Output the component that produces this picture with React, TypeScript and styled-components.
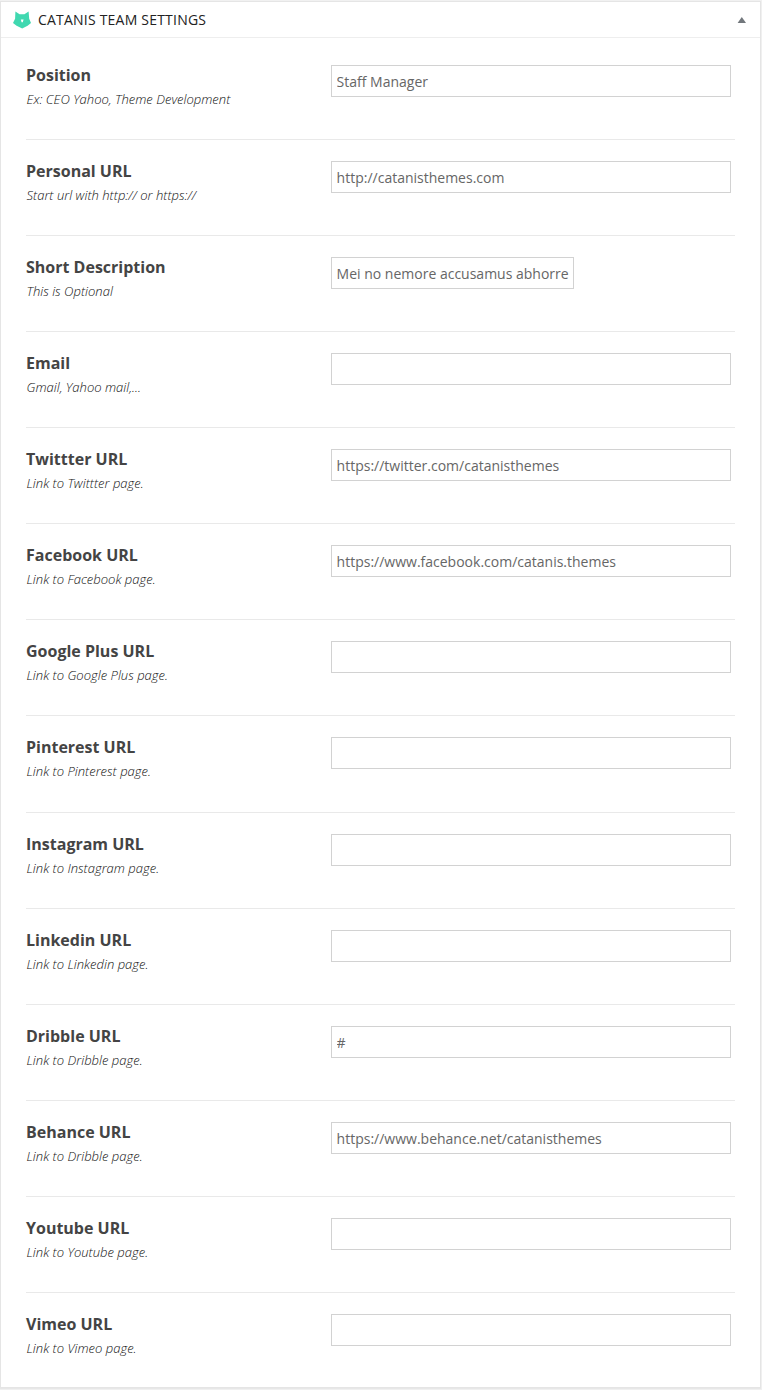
import React from "react";
import styled, { createGlobalStyle } from "styled-components";

const GlobalStyle = createGlobalStyle`
  * { box-sizing: border-box; }
  body {
    margin: 0;
    background: #f1f1f1;
    font-family: "Open Sans", "Liberation Sans", sans-serif;
    color: #444;
  }
`;

const Page = styled.main`
  height: 1390px;
  padding-top: 1px;
`;

const Panel = styled.section`
  width: 761px;
  height: 1387px;
  background: #fff;
  border: 1px solid #e5e5e5;
  box-shadow: 0 1px 1px rgba(0, 0, 0, 0.04);
`;

const Header = styled.header`
  display: flex;
  align-items: center;
  height: 36px;
  padding: 0 14px 0 11px;
  border-bottom: 1px solid #eee;
`;

const Logo = styled.svg`
  width: 20px;
  height: 18px;
  margin-right: 6px;
  flex: none;
`;

const Title = styled.h2`
  margin: 0;
  flex: 1;
  font-size: 14px;
  line-height: 20px;
  font-weight: 400;
  letter-spacing: 0.21px;
  color: #222;
`;

const Toggle = styled.svg`
  width: 9px;
  height: 6px;
  flex: none;
`;

const Fields = styled.div`
  padding: 5.92px 25px 0 25px;
`;

const Row = styled.div`
  display: flex;
  height: 96.08px;
  padding-top: 21px;
  border-bottom: 1px solid #e9e9e9;
  &:last-child { border-bottom: 0; }
`;

const Caption = styled.div`
  width: 305px;
  flex: none;
`;

const Label = styled.label`
  display: block;
  font-size: 16px;
  line-height: 20px;
  font-weight: 700;
  color: #444;
`;

const Hint = styled.p`
  margin: 5px 0 0;
  padding-left: 0.5px;
  font-size: 13px;
  line-height: 18px;
  letter-spacing: 0.02px;
  font-style: italic;
  font-weight: 300;
  color: #111;
`;

const Input = styled.input<{ $width?: number }>`
  width: ${(p) => p.$width ?? 400}px;
  height: 32px;
  padding: 1.4px 4px 0 4.6px;
  border: 1px solid #d2d2d2;
  border-radius: 0;
  background: #fff;
  font: 14px "Open Sans", "Liberation Sans", sans-serif;
  color: #666;
  outline: none;
`;

type Field = { label: string; hint: string; value?: string; width?: number };

const fields: Field[] = [
  { label: "Position", hint: "Ex: CEO Yahoo, Theme Development", value: "Staff Manager" },
  { label: "Personal URL", hint: "Start url with http:// or https://", value: "http://catanisthemes.com" },
  { label: "Short Description", hint: "This is Optional", value: "Mei no nemore accusamus abhorre", width: 243 },
  { label: "Email", hint: "Gmail, Yahoo mail,..." },
  { label: "Twittter URL", hint: "Link to Twittter page.", value: "https://twitter.com/catanisthemes" },
  { label: "Facebook URL", hint: "Link to Facebook page.", value: "https://www.facebook.com/catanis.themes" },
  { label: "Google Plus URL", hint: "Link to Google Plus page." },
  { label: "Pinterest URL", hint: "Link to Pinterest page." },
  { label: "Instagram URL", hint: "Link to Instagram page." },
  { label: "Linkedin URL", hint: "Link to Linkedin page." },
  { label: "Dribble URL", hint: "Link to Dribble page.", value: "#" },
  { label: "Behance URL", hint: "Link to Dribble page.", value: "https://www.behance.net/catanisthemes" },
  { label: "Youtube URL", hint: "Link to Youtube page." },
  { label: "Vimeo URL", hint: "Link to Vimeo page." },
];

export default function App() {
  return (
    <Page>
      <GlobalStyle />
      <Panel>
        <Header>
          <Logo viewBox="0 0 20 18" aria-hidden="true">
            <path
              d="M3.4 0.6 L7.6 3.2 H12.4 L16.6 0.6 L17.2 7.8 L19 12 L15.6 14.8 L10.2 17.4 L4.6 14.8 L1 12 L3.1 7.8 Z"
              fill="#40d8b0"
            />
            <path d="M8.8 8.6 H11.6 L10.8 11.2 H9.6 Z" fill="#fff" />
          </Logo>
          <Title>CATANIS TEAM SETTINGS</Title>
          <Toggle viewBox="0 0 9 6" aria-hidden="true">
            <path d="M4.8 0 L9 6 H0.6 Z" fill="#72777c" />
          </Toggle>
        </Header>
        <Fields>
          {fields.map((f, i) => (
            <Row key={f.label}>
              <Caption>
                <Label htmlFor={`field-${i}`}>{f.label}</Label>
                <Hint>{f.hint}</Hint>
              </Caption>
              <Input id={`field-${i}`} type="text" defaultValue={f.value ?? ""} $width={f.width} />
            </Row>
          ))}
        </Fields>
      </Panel>
    </Page>
  );
}
